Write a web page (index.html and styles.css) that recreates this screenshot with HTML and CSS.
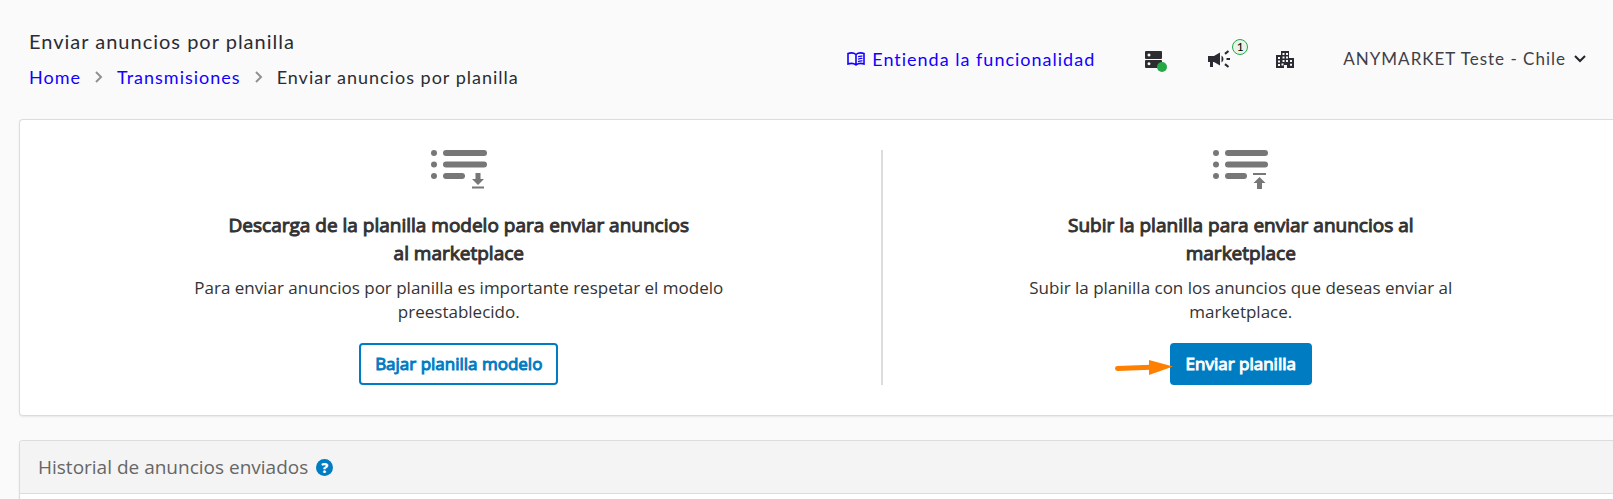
FILE: index.html
```html
<!DOCTYPE html>
<html lang="es">
<head>
  <meta charset="UTF-8">
  <meta name="viewport" content="width=device-width, initial-scale=1.0">
  <title>Enviar anuncios por planilla</title>
  <link rel="stylesheet" href="styles.css">
</head>
<body>
  <header class="topbar">
    <div class="heading">
      <h1>Enviar anuncios por planilla</h1>
      <nav class="breadcrumb">
        <a href="#">Home</a>
        <svg width="8" height="12" viewBox="0 0 8 12"><path d="M1 1l5 5-5 5" fill="none" stroke="#919194" stroke-width="2"/></svg>
        <a href="#">Transmisiones</a>
        <svg width="8" height="12" viewBox="0 0 8 12"><path d="M1 1l5 5-5 5" fill="none" stroke="#919194" stroke-width="2"/></svg>
        <span>Enviar anuncios por planilla</span>
      </nav>
    </div>

    <div class="tools">
      <a class="help-link" href="#">
        <svg width="18" height="14" viewBox="0 0 18 14" fill="none" stroke="currentColor">
          <path d="M9 2.5C7 .8 3.5.6 1 1.5v10.500C3.500 11.200 7 11.400 9 13c2-1.600 5.500-1.800 8-1V1.500C14.500.6 11 .8 9 2.500zV13" stroke-width="1.600"/>
          <path d="M11 4.800q2-1 4.500-.7M11 7.200q2-1 4.500-.7M11 9.600q2-1 4.500-.7" stroke-width="1.200"/>
        </svg>
        <span>Entienda la funcionalidad</span>
      </a>
      <button class="icon-btn server" aria-label="Estado">
        <svg width="17" height="17" viewBox="0 0 17 17">
          <path fill="#2d2d30" fill-rule="evenodd" d="M1 0h15q1 0 1 1v6q0 1-1 1H1q-1 0-1-1V1q0-1 1-1zM4 2.500a1.500 1.500 0 1 0 .01 0zM1 9h15q1 0 1 1v6q0 1-1 1H1q-1 0-1-1v-6q0-1 1-1zM4 11.300a1.500 1.500 0 1 0 .01 0z"/>
        </svg>
        <span class="dot"></span>
      </button>
      <button class="icon-btn news" aria-label="Novedades">
        <svg width="22" height="18" viewBox="0 0 22 18">
          <path fill="#2b2c33" d="M0 6h6l6-3.500v13L6 12H5v5H2v-5H0zM13.500 5.500q2 1.200 2 3.500t-2 3.500z"/>
          <path d="M17 3.800L20.500 1M18.500 9H22M17 14.200l3.500 2.800" stroke="#2b2c33" stroke-width="2.200"/>
        </svg>
        <span class="badge">1</span>
      </button>
      <button class="icon-btn company" aria-label="Empresa">
        <svg width="18" height="17" viewBox="0 0 18 17">
          <path fill="#2b2c33" d="M5 0h8v7h5v10h-7v-3H8v3H0V4h5z"/>
          <path fill="#fafafa" d="M6.500 2h2v2h-2zM10 2h2v2h-2zM6.500 5.500h2v2h-2zM10 5.500h2v2h-2zM6.500 9h2v2h-2zM10 9h2v2h-2zM2 6h2v2H2zM2 9.500h2v2H2zM2 13h2v2H2zM5.500 12.500h2v2h-2zM14 9h2v2h-2zM14 12.800h2v2h-2z"/>
        </svg>
      </button>
      <button class="account">
        <span>ANYMARKET Teste - Chile</span>
        <svg width="12" height="8" viewBox="0 0 12 8"><path d="M1 1l5 5 5-5" fill="none" stroke="#212529" stroke-width="2"/></svg>
      </button>
    </div>
  </header>

  <main>
    <section class="card actions">
      <div class="action">
        <svg width="56" height="39" viewBox="0 0 56 39" fill="#777">
          <circle cx="3" cy="3" r="3"/><circle cx="3" cy="14.500" r="3"/><circle cx="3" cy="26" r="3"/>
          <rect x="12" width="44" height="6" rx="3"/>
          <rect x="12" y="11.500" width="44" height="6" rx="3"/>
          <rect x="12" y="23" width="22" height="6" rx="3"/>
          <path d="M44.500 23h5v6H53l-6 6-6-6h3.500zM41 36.500h12v2H41z"/>
        </svg>
        <h2>Descarga de la planilla modelo para enviar anuncios al marketplace</h2>
        <p>Para enviar anuncios por planilla es importante respetar el modelo preestablecido.</p>
        <button class="btn btn-outline">Bajar planilla modelo</button>
      </div>
      <div class="action">
        <svg width="56" height="39" viewBox="0 0 56 39" fill="#777">
          <circle cx="3" cy="3" r="3"/><circle cx="3" cy="14.500" r="3"/><circle cx="3" cy="26" r="3"/>
          <rect x="12" width="43" height="6" rx="3"/>
          <rect x="12" y="11.500" width="43" height="6" rx="3"/>
          <rect x="12" y="23" width="22" height="6" rx="3"/>
          <path d="M40 23h13v2H40zM46.500 27l6 6H49v6h-5v-6h-3.500z"/>
        </svg>
        <h2>Subir la planilla para enviar anuncios al marketplace</h2>
        <p>Subir la planilla con los anuncios que deseas enviar al marketplace.</p>
        <button class="btn btn-primary">
          Enviar planilla
          <svg class="pointer" width="58" height="16" viewBox="0 0 58 16">
            <path d="M2.500 8.500L36 7.300" stroke="#ff8000" stroke-width="5" stroke-linecap="round"/>
            <path d="M34 0l24 6.500L34 15z" fill="#ff8000"/>
          </svg>
        </button>
      </div>
    </section>

    <section class="card history">
      <div class="card-header">
        <h2>Historial de anuncios enviados</h2>
        <button class="hint" aria-label="Ayuda">?</button>
      </div>
      <div class="card-body"></div>
    </section>
  </main>
</body>
</html>
```
FILE: styles.css
```css
:root {
  --blue: #007cc3;
  --link: #1400ff;
  --text: #333;
  --border: #dcdcdc;
}

* {
  box-sizing: border-box;
  margin: 0;
  padding: 0;
}

body {
  font-family: "Open Sans", sans-serif;
  background-color: #fafafa;
  color: var(--text);
  overflow: hidden;
}

button {
  font: inherit;
  background: none;
  border: none;
  cursor: pointer;
}

a {
  color: var(--link);
  text-decoration: none;
}

svg {
  flex: none;
}

.topbar {
  display: flex;
  justify-content: space-between;
  align-items: center;
  padding: 27px 27px 28px 29px;
  font-family: Lato, sans-serif;
  font-size: 18px;
  line-height: 28px;
  letter-spacing: 1px;
  color: #2b2c33;
  white-space: nowrap;
}

.heading h1 {
  font-size: 20px;
  font-weight: 400;
  line-height: 28px;
  margin-bottom: 8px;
}

.breadcrumb {
  display: flex;
  align-items: center;
  gap: 14px;
}

.tools {
  display: flex;
  align-items: center;
}

.help-link {
  display: flex;
  align-items: center;
  gap: 7px;
  margin-right: 50px;
}

.icon-btn {
  position: relative;
  display: flex;
}

.server,
.news {
  margin-right: 46px;
}

.company {
  margin-right: 49px;
}

.dot {
  position: absolute;
  right: -5px;
  bottom: -4px;
  width: 10px;
  height: 10px;
  border-radius: 50%;
  background-color: #28a745;
}

.badge {
  position: absolute;
  left: 24px;
  top: -11px;
  width: 16px;
  height: 16px;
  border: 1px solid #28a745;
  border-radius: 50%;
  background-color: #e6f5e9;
  font-size: 12px;
  line-height: 14px;
  letter-spacing: 0;
  text-align: center;
}

.account {
  display: flex;
  align-items: center;
  gap: 8px;
  font-size: 17px;
  letter-spacing: 1px;
  color: #3f4047;
}

main {
  margin-left: 19px;
}

.card {
  background-color: #fff;
  border: 1px solid var(--border);
  border-right: none;
  border-radius: 4px 0 0 4px;
  box-shadow: 0 1px 2px rgba(0, 0, 0, 0.08);
}

.actions {
  display: grid;
  grid-template-columns: 843fr 718fr;
  padding: 30px 14px 30px 17px;
  margin-bottom: 24px;
}

.action {
  display: flex;
  flex-direction: column;
  align-items: center;
  padding: 0 18%;
  text-align: center;
}

.action + .action {
  border-left: 2px solid var(--border);
}

.action h2,
.btn {
  font-weight: 400;
  -webkit-text-stroke: 1px currentColor;
}

.action h2 {
  max-width: 480px;
  margin-top: 22px;
  font-size: 19px;
  line-height: 28px;
}

.action p {
  margin: 9px 0 19px;
  font-size: 17px;
  line-height: 24px;
}

.btn {
  position: relative;
  padding: 7px 14px;
  border: 2px solid var(--blue);
  border-radius: 4px;
  font-size: 17px;
  line-height: 24px;
}

.btn-outline {
  color: var(--blue);
}

.btn-primary {
  background-color: var(--blue);
  color: #fff;
}

.pointer {
  position: absolute;
  right: calc(100% - 1px);
  top: 15px;
}

.card-header {
  display: flex;
  align-items: center;
  gap: 8px;
  padding: 12px 18px;
  background-color: #f4f4f4;
  border-bottom: 1px solid var(--border);
  border-radius: 4px 0 0 0;
}

.card-header h2 {
  font-size: 19px;
  font-weight: 400;
  line-height: 28px;
  color: #666;
}

.hint {
  width: 17px;
  height: 17px;
  border-radius: 50%;
  background-color: var(--blue);
  color: #fff;
  font-size: 14px;
  font-weight: 800;
  line-height: 17px;
}

.card-body {
  min-height: 60px;
}
```
